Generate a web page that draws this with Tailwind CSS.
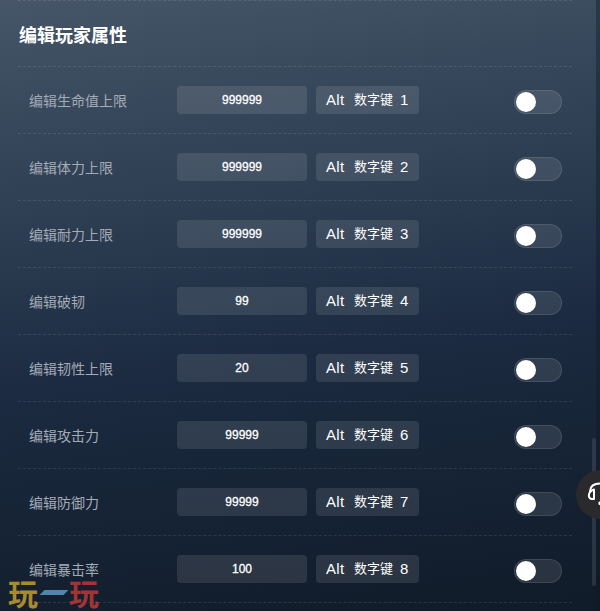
<!DOCTYPE html>
<html>
<head>
<meta charset="utf-8">
<script src="https://cdn.jsdelivr.net/npm/@tailwindcss/browser@4"></script>
</head>
<body class="m-0">
<div class="relative w-[600px] h-[611px] overflow-hidden bg-[linear-gradient(172deg,#465668_0%,#2f3f54_30%,#1b2a40_58%,#101b28_100%)] font-['Liberation_Sans','Noto_Sans_CJK_SC',sans-serif]">
  <div class="w-[596px] pl-[18px] pr-[24px]">
    <div class="h-[67px] border-y border-dashed border-white/10 flex items-center pl-px pt-[5px] text-[18px] leading-[26px] font-bold text-white">编辑玩家属性</div>

    <div class="h-[67px] border-b border-dashed border-white/10 flex items-center pl-[11px]">
      <span class="w-[148px] text-[14px] text-[#a3abb6] pt-[2px]">编辑生命值上限</span>
      <div class="w-[130px] h-[28px] rounded-[4px] bg-white/10 flex items-center justify-center text-[12px] [-webkit-text-stroke:0.3px_white] text-white">999999</div>
      <div class="ml-[9px] w-[103px] h-[28px] rounded-[4px] bg-white/10 flex items-center pl-[10px] text-[15px] text-white"><span class="w-[28px] tracking-[0.3px]">Alt</span><span class="text-[13px]">数字键</span><span class="ml-[7px]">1</span></div>
      <div class="ml-[95px] mt-[3px] w-[48px] h-[24px] rounded-full bg-white/10 border border-white/10 flex items-center pl-[1px]"><div class="w-[20px] h-[20px] rounded-full bg-white"></div></div>
    </div>
    <div class="h-[67px] border-b border-dashed border-white/10 flex items-center pl-[11px]">
      <span class="w-[148px] text-[14px] text-[#a3abb6] pt-[2px]">编辑体力上限</span>
      <div class="w-[130px] h-[28px] rounded-[4px] bg-white/10 flex items-center justify-center text-[12px] [-webkit-text-stroke:0.3px_white] text-white">999999</div>
      <div class="ml-[9px] w-[103px] h-[28px] rounded-[4px] bg-white/10 flex items-center pl-[10px] text-[15px] text-white"><span class="w-[28px] tracking-[0.3px]">Alt</span><span class="text-[13px]">数字键</span><span class="ml-[7px]">2</span></div>
      <div class="ml-[95px] mt-[3px] w-[48px] h-[24px] rounded-full bg-white/10 border border-white/10 flex items-center pl-[1px]"><div class="w-[20px] h-[20px] rounded-full bg-white"></div></div>
    </div>
    <div class="h-[67px] border-b border-dashed border-white/10 flex items-center pl-[11px]">
      <span class="w-[148px] text-[14px] text-[#a3abb6] pt-[2px]">编辑耐力上限</span>
      <div class="w-[130px] h-[28px] rounded-[4px] bg-white/10 flex items-center justify-center text-[12px] [-webkit-text-stroke:0.3px_white] text-white">999999</div>
      <div class="ml-[9px] w-[103px] h-[28px] rounded-[4px] bg-white/10 flex items-center pl-[10px] text-[15px] text-white"><span class="w-[28px] tracking-[0.3px]">Alt</span><span class="text-[13px]">数字键</span><span class="ml-[7px]">3</span></div>
      <div class="ml-[95px] mt-[3px] w-[48px] h-[24px] rounded-full bg-white/10 border border-white/10 flex items-center pl-[1px]"><div class="w-[20px] h-[20px] rounded-full bg-white"></div></div>
    </div>
    <div class="h-[67px] border-b border-dashed border-white/10 flex items-center pl-[11px]">
      <span class="w-[148px] text-[14px] text-[#a3abb6] pt-[2px]">编辑破韧</span>
      <div class="w-[130px] h-[28px] rounded-[4px] bg-white/10 flex items-center justify-center text-[12px] [-webkit-text-stroke:0.3px_white] text-white">99</div>
      <div class="ml-[9px] w-[103px] h-[28px] rounded-[4px] bg-white/10 flex items-center pl-[10px] text-[15px] text-white"><span class="w-[28px] tracking-[0.3px]">Alt</span><span class="text-[13px]">数字键</span><span class="ml-[7px]">4</span></div>
      <div class="ml-[95px] mt-[3px] w-[48px] h-[24px] rounded-full bg-white/10 border border-white/10 flex items-center pl-[1px]"><div class="w-[20px] h-[20px] rounded-full bg-white"></div></div>
    </div>
    <div class="h-[67px] border-b border-dashed border-white/10 flex items-center pl-[11px]">
      <span class="w-[148px] text-[14px] text-[#a3abb6] pt-[2px]">编辑韧性上限</span>
      <div class="w-[130px] h-[28px] rounded-[4px] bg-white/10 flex items-center justify-center text-[12px] [-webkit-text-stroke:0.3px_white] text-white">20</div>
      <div class="ml-[9px] w-[103px] h-[28px] rounded-[4px] bg-white/10 flex items-center pl-[10px] text-[15px] text-white"><span class="w-[28px] tracking-[0.3px]">Alt</span><span class="text-[13px]">数字键</span><span class="ml-[7px]">5</span></div>
      <div class="ml-[95px] mt-[3px] w-[48px] h-[24px] rounded-full bg-white/10 border border-white/10 flex items-center pl-[1px]"><div class="w-[20px] h-[20px] rounded-full bg-white"></div></div>
    </div>
    <div class="h-[67px] border-b border-dashed border-white/10 flex items-center pl-[11px]">
      <span class="w-[148px] text-[14px] text-[#a3abb6] pt-[2px]">编辑攻击力</span>
      <div class="w-[130px] h-[28px] rounded-[4px] bg-white/10 flex items-center justify-center text-[12px] [-webkit-text-stroke:0.3px_white] text-white">99999</div>
      <div class="ml-[9px] w-[103px] h-[28px] rounded-[4px] bg-white/10 flex items-center pl-[10px] text-[15px] text-white"><span class="w-[28px] tracking-[0.3px]">Alt</span><span class="text-[13px]">数字键</span><span class="ml-[7px]">6</span></div>
      <div class="ml-[95px] mt-[3px] w-[48px] h-[24px] rounded-full bg-white/10 border border-white/10 flex items-center pl-[1px]"><div class="w-[20px] h-[20px] rounded-full bg-white"></div></div>
    </div>
    <div class="h-[67px] border-b border-dashed border-white/10 flex items-center pl-[11px]">
      <span class="w-[148px] text-[14px] text-[#a3abb6] pt-[2px]">编辑防御力</span>
      <div class="w-[130px] h-[28px] rounded-[4px] bg-white/10 flex items-center justify-center text-[12px] [-webkit-text-stroke:0.3px_white] text-white">99999</div>
      <div class="ml-[9px] w-[103px] h-[28px] rounded-[4px] bg-white/10 flex items-center pl-[10px] text-[15px] text-white"><span class="w-[28px] tracking-[0.3px]">Alt</span><span class="text-[13px]">数字键</span><span class="ml-[7px]">7</span></div>
      <div class="ml-[95px] mt-[3px] w-[48px] h-[24px] rounded-full bg-white/10 border border-white/10 flex items-center pl-[1px]"><div class="w-[20px] h-[20px] rounded-full bg-white"></div></div>
    </div>
    <div class="h-[67px] border-b border-dashed border-white/10 flex items-center pl-[11px]">
      <span class="w-[148px] text-[14px] text-[#a3abb6] pt-[2px]">编辑暴击率</span>
      <div class="w-[130px] h-[28px] rounded-[4px] bg-white/10 flex items-center justify-center text-[12px] [-webkit-text-stroke:0.3px_white] text-white">100</div>
      <div class="ml-[9px] w-[103px] h-[28px] rounded-[4px] bg-white/10 flex items-center pl-[10px] text-[15px] text-white"><span class="w-[28px] tracking-[0.3px]">Alt</span><span class="text-[13px]">数字键</span><span class="ml-[7px]">8</span></div>
      <div class="ml-[95px] mt-[3px] w-[48px] h-[24px] rounded-full bg-white/10 border border-white/10 flex items-center pl-[1px]"><div class="w-[20px] h-[20px] rounded-full bg-white"></div></div>
    </div>
  </div>

  <!-- right edge strip + scrollbar -->
  <div class="absolute top-0 right-0 w-[4px] h-full bg-[#0f1a28]/40"></div>
  <div class="absolute left-[592px] top-[438px] w-[4px] h-[148px] rounded-full bg-white/10"></div>

  <!-- floating round button -->
  <div class="absolute left-[576px] top-[470px] w-[49px] h-[49px] rounded-full bg-[#2a2a2c]">
    <svg class="absolute left-[10px] top-[11px]" width="24" height="26" viewBox="0 0 24 26" fill="none" stroke="#fff" stroke-width="2" stroke-linecap="round" stroke-linejoin="round"><path d="M4 10C4.500 5 8 2.500 14 2.500"/><path d="M8 8.500V18H6C2 18 1 11 8 8.500z"/><path d="M13.500 21.500v1.500"/></svg>
  </div>

  <!-- watermark logo -->
  <div class="absolute left-[8px] top-[577px] flex items-center font-['Noto_Sans_CJK_SC',sans-serif] font-bold text-[30px] leading-[30px]">
    <span class="text-[#a98a2c]">玩</span>
    <span class="w-[24px] h-[5px] ml-[4px] mr-[3px] -skew-x-[45deg] bg-[#4f86ad]"></span>
    <span class="text-[#a33434]">玩</span>
  </div>
</div>
</body>
</html>
